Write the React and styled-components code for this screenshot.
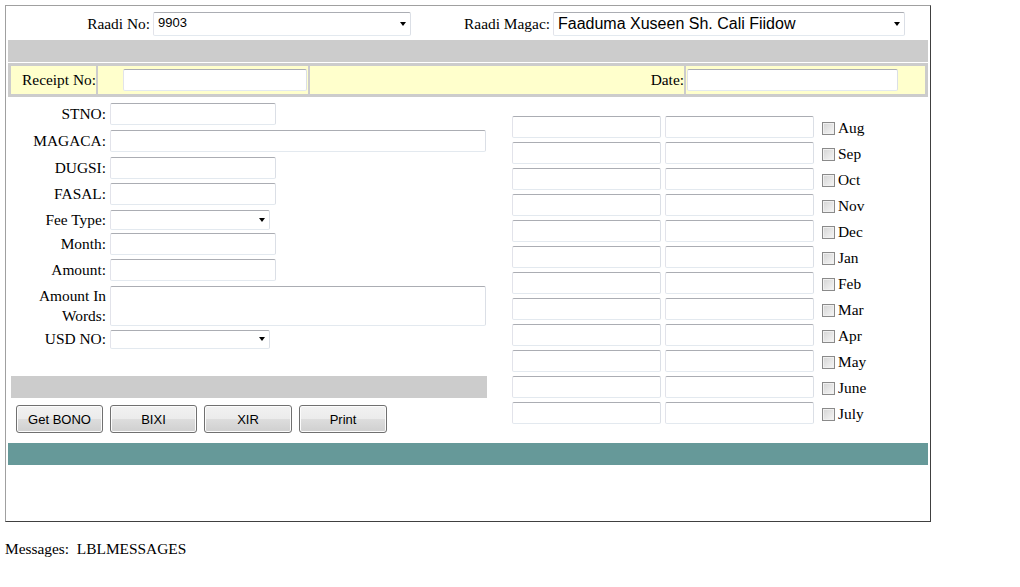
import React from "react";
import styled, { createGlobalStyle } from "styled-components";

const GlobalStyle = createGlobalStyle`
  body {
    margin: 0;
    background: #fff;
    color: #000;
    font-family: "Liberation Serif", "Times New Roman", serif;
    font-size: 15.4px;
  }
`;

const Page = styled.div`
  padding: 5px 0 0 5px;
`;

const Frame = styled.div`
  box-sizing: border-box;
  width: 926px;
  height: 517px;
  padding: 0 2px;
  border: 1px solid;
  border-color: #a0a0a0 #404040 #404040 #a0a0a0;
`;

const Header = styled.div`
  box-sizing: border-box;
  height: 34px;
  padding-top: 6px;
  display: grid;
  grid-template-columns: 142px 258px 136px 352px;
  column-gap: 3px;
  align-items: start;
`;

const HeadLabel = styled.label`
  text-align: right;
  line-height: 24px;
`;

const SelectWrap = styled.div`
  position: relative;
  width: ${(p) => p.$w || "100%"};

  &::after {
    content: "";
    position: absolute;
    right: ${(p) => p.$arrowRight || 5}px;
    top: 50%;
    margin-top: -2px;
    border-left: 3.5px solid transparent;
    border-right: 3.5px solid transparent;
    border-top: 4px solid #000;
    pointer-events: none;
  }
`;

const Select = styled.select`
  appearance: none;
  box-sizing: border-box;
  width: 100%;
  height: ${(p) => p.$h || 24}px;
  padding: 0 16px ${(p) => p.$pb || 0}px 4px;
  font-family: Arial, "Liberation Sans", sans-serif;
  font-size: ${(p) => p.$fs || 13}px;
  color: #000;
  background: #fff;
  border: 1px solid;
  border-color: #abadb3 #dbdfe6 #e3e9ef #e2e3ea;
  border-radius: 2px;
  outline: none;
`;

const GrayBar = styled.div`
  height: 22px;
  background: #cccccc;
  margin: ${(p) => p.$m || "0"};
`;

const ReceiptTable = styled.div`
  margin-top: 1px;
  padding: 3px;
  background: #cccccc;
  display: grid;
  grid-template-columns: 85px 210px 374px 1fr;
  column-gap: 2px;
`;

const Cell = styled.div`
  box-sizing: border-box;
  height: 28px;
  background: #ffffcc;
  display: flex;
  align-items: center;
  justify-content: ${(p) => p.$justify || "flex-start"};
  padding: ${(p) => p.$pad || "0"};
`;

const TextInput = styled.input`
  box-sizing: border-box;
  width: ${(p) => p.$w}px;
  height: 22px;
  padding: 0 3px;
  font-family: Arial, "Liberation Sans", sans-serif;
  font-size: 13px;
  background: #fff;
  border: 1px solid;
  border-color: #abadb3 #dbdfe6 #e3e9ef #e2e3ea;
  border-radius: 2px;
  outline: none;
`;

const TextArea = styled.textarea`
  box-sizing: border-box;
  display: block;
  width: 376px;
  height: 40px;
  resize: none;
  font-family: Arial, "Liberation Sans", sans-serif;
  font-size: 13px;
  border: 1px solid;
  border-color: #abadb3 #dbdfe6 #e3e9ef #e2e3ea;
  border-radius: 2px;
  outline: none;
`;

const Main = styled.div`
  display: flex;
  align-items: flex-start;
`;

const LeftCol = styled.div`
  box-sizing: border-box;
  width: 482px;
  padding: 6px 3px 0;
`;

const Field = styled.div`
  display: flex;
  align-items: center;
  column-gap: 4px;
  margin-bottom: ${(p) => p.$mb || 0}px;
`;

const FieldLabel = styled.label`
  flex: 0 0 95px;
  text-align: right;
  line-height: 20px;
`;

const Buttons = styled.div`
  display: flex;
  column-gap: 7px;
  padding-left: 5px;
  margin-top: 7px;
`;

const Button = styled.button`
  box-sizing: border-box;
  width: ${(p) => p.$w || 87}px;
  height: 28px;
  padding: 0;
  font-family: Arial, "Liberation Sans", sans-serif;
  font-size: 13px;
  color: #000;
  border: 1px solid #707070;
  border-radius: 3px;
  background: linear-gradient(#f2f2f2 0%, #ebebeb 50%, #dddddd 51%, #cfcfcf 100%);
  box-shadow: inset 0 0 0 1px #fcfcfc;
`;

const RightCol = styled.div`
  margin-left: 22px;
  padding-top: 19px;
  display: grid;
  grid-template-columns: 149px 149px auto;
  column-gap: 4px;
  row-gap: 4px;
  align-items: center;
`;

const MonthCheck = styled.label`
  display: flex;
  align-items: center;
  column-gap: 3px;
  margin-left: 4px;
  padding-top: 2px;
`;

const Check = styled.input`
  appearance: none;
  box-sizing: border-box;
  width: 13px;
  height: 13px;
  margin: 0;
  border: 1px solid #8a8a8a;
  background: linear-gradient(135deg, #d4d4d4, #f6f6f6);
  box-shadow: inset 0 0 0 1px #f0f0f0;
`;

const TealBar = styled.div`
  height: 22px;
  margin-top: 10px;
  background: #669999;
`;

const Messages = styled.div`
  margin-top: 18px;
  white-space: pre;
`;

const months = ["Aug", "Sep", "Oct", "Nov", "Dec", "Jan", "Feb", "Mar", "Apr", "May", "June", "July"];

export default function App() {
  return (
    <Page>
      <GlobalStyle />
      <Frame>
        <Header>
          <HeadLabel>Raadi No:</HeadLabel>
          <SelectWrap>
            <Select $pb={3} defaultValue="9903">
              <option>9903</option>
            </Select>
          </SelectWrap>
          <HeadLabel>Raadi Magac:</HeadLabel>
          <SelectWrap>
            <Select $fs={16} $pb={1} defaultValue="f">
              <option value="f">Faaduma Xuseen Sh. Cali Fiidow</option>
            </Select>
          </SelectWrap>
        </Header>

        <GrayBar />

        <ReceiptTable>
          <Cell $justify="flex-end">Receipt No:</Cell>
          <Cell $justify="flex-end" $pad="0 1px 0 0">
            <TextInput $w={184} />
          </Cell>
          <Cell $justify="flex-end">Date:</Cell>
          <Cell $pad="0 0 0 1px">
            <TextInput $w={211} />
          </Cell>
        </ReceiptTable>

        <Main>
          <LeftCol>
            <Field $mb={5}>
              <FieldLabel>STNO:</FieldLabel>
              <TextInput $w={166} />
            </Field>
            <Field $mb={5}>
              <FieldLabel>MAGACA:</FieldLabel>
              <TextInput $w={376} />
            </Field>
            <Field $mb={4}>
              <FieldLabel>DUGSI:</FieldLabel>
              <TextInput $w={166} />
            </Field>
            <Field $mb={5}>
              <FieldLabel>FASAL:</FieldLabel>
              <TextInput $w={166} />
            </Field>
            <Field $mb={3}>
              <FieldLabel>Fee Type:</FieldLabel>
              <SelectWrap $w="160px">
                <Select $h={20} />
              </SelectWrap>
            </Field>
            <Field $mb={4}>
              <FieldLabel>Month:</FieldLabel>
              <TextInput $w={166} />
            </Field>
            <Field $mb={5}>
              <FieldLabel>Amount:</FieldLabel>
              <TextInput $w={166} />
            </Field>
            <Field $mb={3}>
              <FieldLabel>
                Amount In
                <br />
                Words:
              </FieldLabel>
              <TextArea />
            </Field>
            <Field>
              <FieldLabel>USD NO:</FieldLabel>
              <SelectWrap $w="160px">
                <Select $h={19} />
              </SelectWrap>
            </Field>

            <GrayBar $m="27px 0 0" />

            <Buttons>
              <Button>Get BONO</Button>
              <Button>BIXI</Button>
              <Button $w={88}>XIR</Button>
              <Button $w={88}>Print</Button>
            </Buttons>
          </LeftCol>

          <RightCol>
            {months.map((m) => (
              <React.Fragment key={m}>
                <TextInput $w={149} />
                <TextInput $w={149} />
                <MonthCheck>
                  <Check type="checkbox" />
                  {m}
                </MonthCheck>
              </React.Fragment>
            ))}
          </RightCol>
        </Main>

        <TealBar />
      </Frame>
      <Messages>{"Messages:  LBLMESSAGES"}</Messages>
    </Page>
  );
}
